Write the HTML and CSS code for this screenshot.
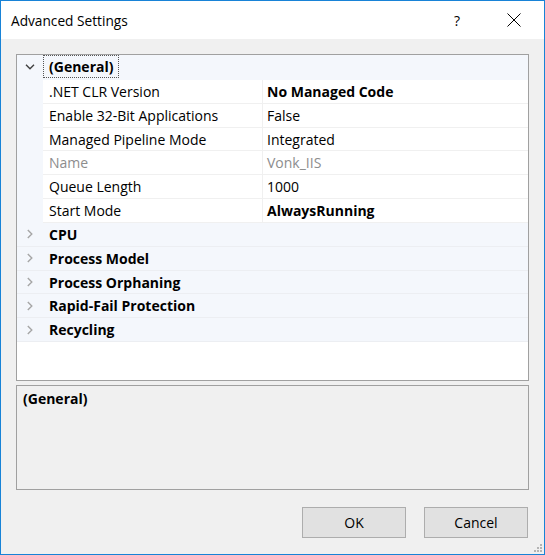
FILE: index.html
```html
<!DOCTYPE html>
<html lang="en">
<head>
    <meta charset="UTF-8">
    <meta name="viewport" content="width=device-width, initial-scale=1.0">
    <title>Advanced Settings</title>
    <link rel="stylesheet" href="styles.css">
</head>
<body>
    <div class="window">
        <div class="titlebar">
            <span class="title">Advanced Settings</span>
            <span class="help">?</span>
            <button class="close" aria-label="Close">
                <svg width="14" height="14" viewBox="0 0 14 14"><path d="M0.5 0.5 L13.5 13.5 M13.5 0.5 L0.5 13.5" stroke="#000" stroke-width="1" fill="none"/></svg>
            </button>
        </div>

        <div class="content">
            <div class="grid">
                <div class="category header">
                    <span class="gutter">
                        <svg width="10" height="6" viewBox="0 0 10 6"><path d="M1 0.8 L5 4.8 L9 0.8" stroke="#404040" stroke-width="1.4" fill="none"/></svg>
                    </span>
                    <span class="cat-name focus">(General)</span>
                </div>

                <div class="prop"><span class="gutter"></span><span class="name">.NET CLR Version</span><span class="value strong">No Managed Code</span></div>
                <div class="prop"><span class="gutter"></span><span class="name">Enable 32-Bit Applications</span><span class="value">False</span></div>
                <div class="prop"><span class="gutter"></span><span class="name">Managed Pipeline Mode</span><span class="value">Integrated</span></div>
                <div class="prop disabled"><span class="gutter"></span><span class="name">Name</span><span class="value">Vonk_IIS</span></div>
                <div class="prop"><span class="gutter"></span><span class="name">Queue Length</span><span class="value">1000</span></div>
                <div class="prop"><span class="gutter"></span><span class="name">Start Mode</span><span class="value strong">AlwaysRunning</span></div>

                <div class="category"><span class="gutter"><svg width="6" height="10" viewBox="0 0 6 10"><path d="M0.8 1 L4.8 5 L0.8 9" stroke="#a6a6a6" stroke-width="1.4" fill="none"/></svg></span><span class="cat-name">CPU</span></div>
                <div class="category"><span class="gutter"><svg width="6" height="10" viewBox="0 0 6 10"><path d="M0.8 1 L4.8 5 L0.8 9" stroke="#a6a6a6" stroke-width="1.4" fill="none"/></svg></span><span class="cat-name">Process Model</span></div>
                <div class="category"><span class="gutter"><svg width="6" height="10" viewBox="0 0 6 10"><path d="M0.8 1 L4.8 5 L0.8 9" stroke="#a6a6a6" stroke-width="1.4" fill="none"/></svg></span><span class="cat-name">Process Orphaning</span></div>
                <div class="category"><span class="gutter"><svg width="6" height="10" viewBox="0 0 6 10"><path d="M0.8 1 L4.8 5 L0.8 9" stroke="#a6a6a6" stroke-width="1.4" fill="none"/></svg></span><span class="cat-name">Rapid-Fail Protection</span></div>
                <div class="category"><span class="gutter"><svg width="6" height="10" viewBox="0 0 6 10"><path d="M0.8 1 L4.8 5 L0.8 9" stroke="#a6a6a6" stroke-width="1.4" fill="none"/></svg></span><span class="cat-name">Recycling</span></div>
            </div>

            <div class="description">
                <h3>(General)</h3>
            </div>

            <div class="buttons">
                <button class="btn">OK</button>
                <button class="btn">Cancel</button>
            </div>
        </div>

        <svg class="grip" width="9" height="9" viewBox="0 0 9 9" fill="#b4b4b4">
            <rect x="7" y="1" width="2" height="2"/>
            <rect x="4" y="4" width="2" height="2"/>
            <rect x="7" y="4" width="2" height="2"/>
            <rect x="1" y="7" width="2" height="2"/>
            <rect x="4" y="7" width="2" height="2"/>
            <rect x="7" y="7" width="2" height="2"/>
        </svg>
    </div>
</body>
</html>
```
FILE: styles.css
```css
* {
    margin: 0;
    padding: 0;
    box-sizing: border-box;
}

body {
    font-family: 'Open Sans', sans-serif;
    font-size: 14px;
    color: #000;
    background: #f0f0f0;
}

.window {
    position: relative;
    width: 545px;
    height: 555px;
    border: 1px solid #1883d7;
    background: #f0f0f0;
    display: flex;
    flex-direction: column;
}

.titlebar {
    height: 38px;
    background: #fff;
    display: flex;
    align-items: center;
    padding: 0 16px 0 10px;
}

.title {
    flex: 1;
    font-size: 13.7px;
}

.help {
    width: 28px;
    margin-right: 30px;
    text-align: center;
    font-size: 14px;
    padding-left: 2px;
}

.close {
    width: 28px;
    height: 28px;
    border: none;
    background: none;
    display: flex;
    align-items: center;
    justify-content: center;
}

.content {
    flex: 1;
    padding: 15px 15px 0;
    display: flex;
    flex-direction: column;
}

/* property grid */
.grid {
    height: 327px;
    border: 1px solid #a0a0a0;
    background: #fff;
}

.gutter {
    width: 26px;
    flex-shrink: 0;
    display: flex;
    align-items: center;
    justify-content: center;
    background: #f4f7fc;
}

.category {
    display: flex;
    height: 23.83px;
    background: #f4f7fc;
    border-bottom: 1px solid #eceef2;
    font-weight: bold;
}

.category.header {
    height: 25px;
    border-bottom: none;
    padding-bottom: 2px;
}

.cat-name {
    display: flex;
    align-items: center;
    padding-left: 6px;
}

.cat-name.focus {
    padding: 0 5px;
    border: 1px dotted #555;
}

.prop {
    display: flex;
    height: 23.83px;
}

.prop .name,
.prop .value {
    display: flex;
    align-items: center;
    border-bottom: 1px solid #f0f0f0;
    white-space: nowrap;
}

.prop .name {
    width: 220px;
    padding-left: 6px;
    border-right: 1px solid #f0f0f0;
}

.prop .value {
    flex: 1;
    padding-left: 4px;
}

.prop .value.strong {
    font-weight: bold;
}

.prop.disabled .name,
.prop.disabled .value {
    color: #8d8d8d;
}

/* description panel */
.description {
    margin-top: 4px;
    height: 105px;
    border: 1px solid #a0a0a0;
    padding: 3px 6px;
}

.description h3 {
    font-size: 14px;
    font-weight: bold;
}

.buttons {
    margin-top: 17px;
    display: flex;
    justify-content: flex-end;
    gap: 18px;
    padding-right: 1px;
}

.btn {
    width: 104px;
    height: 31px;
    background: #e1e1e1;
    border: 1px solid #adadad;
    font-family: 'Open Sans', sans-serif;
    font-size: 14px;
    color: #000;
}

.grip {
    position: absolute;
    right: 2px;
    bottom: 2px;
}
```
